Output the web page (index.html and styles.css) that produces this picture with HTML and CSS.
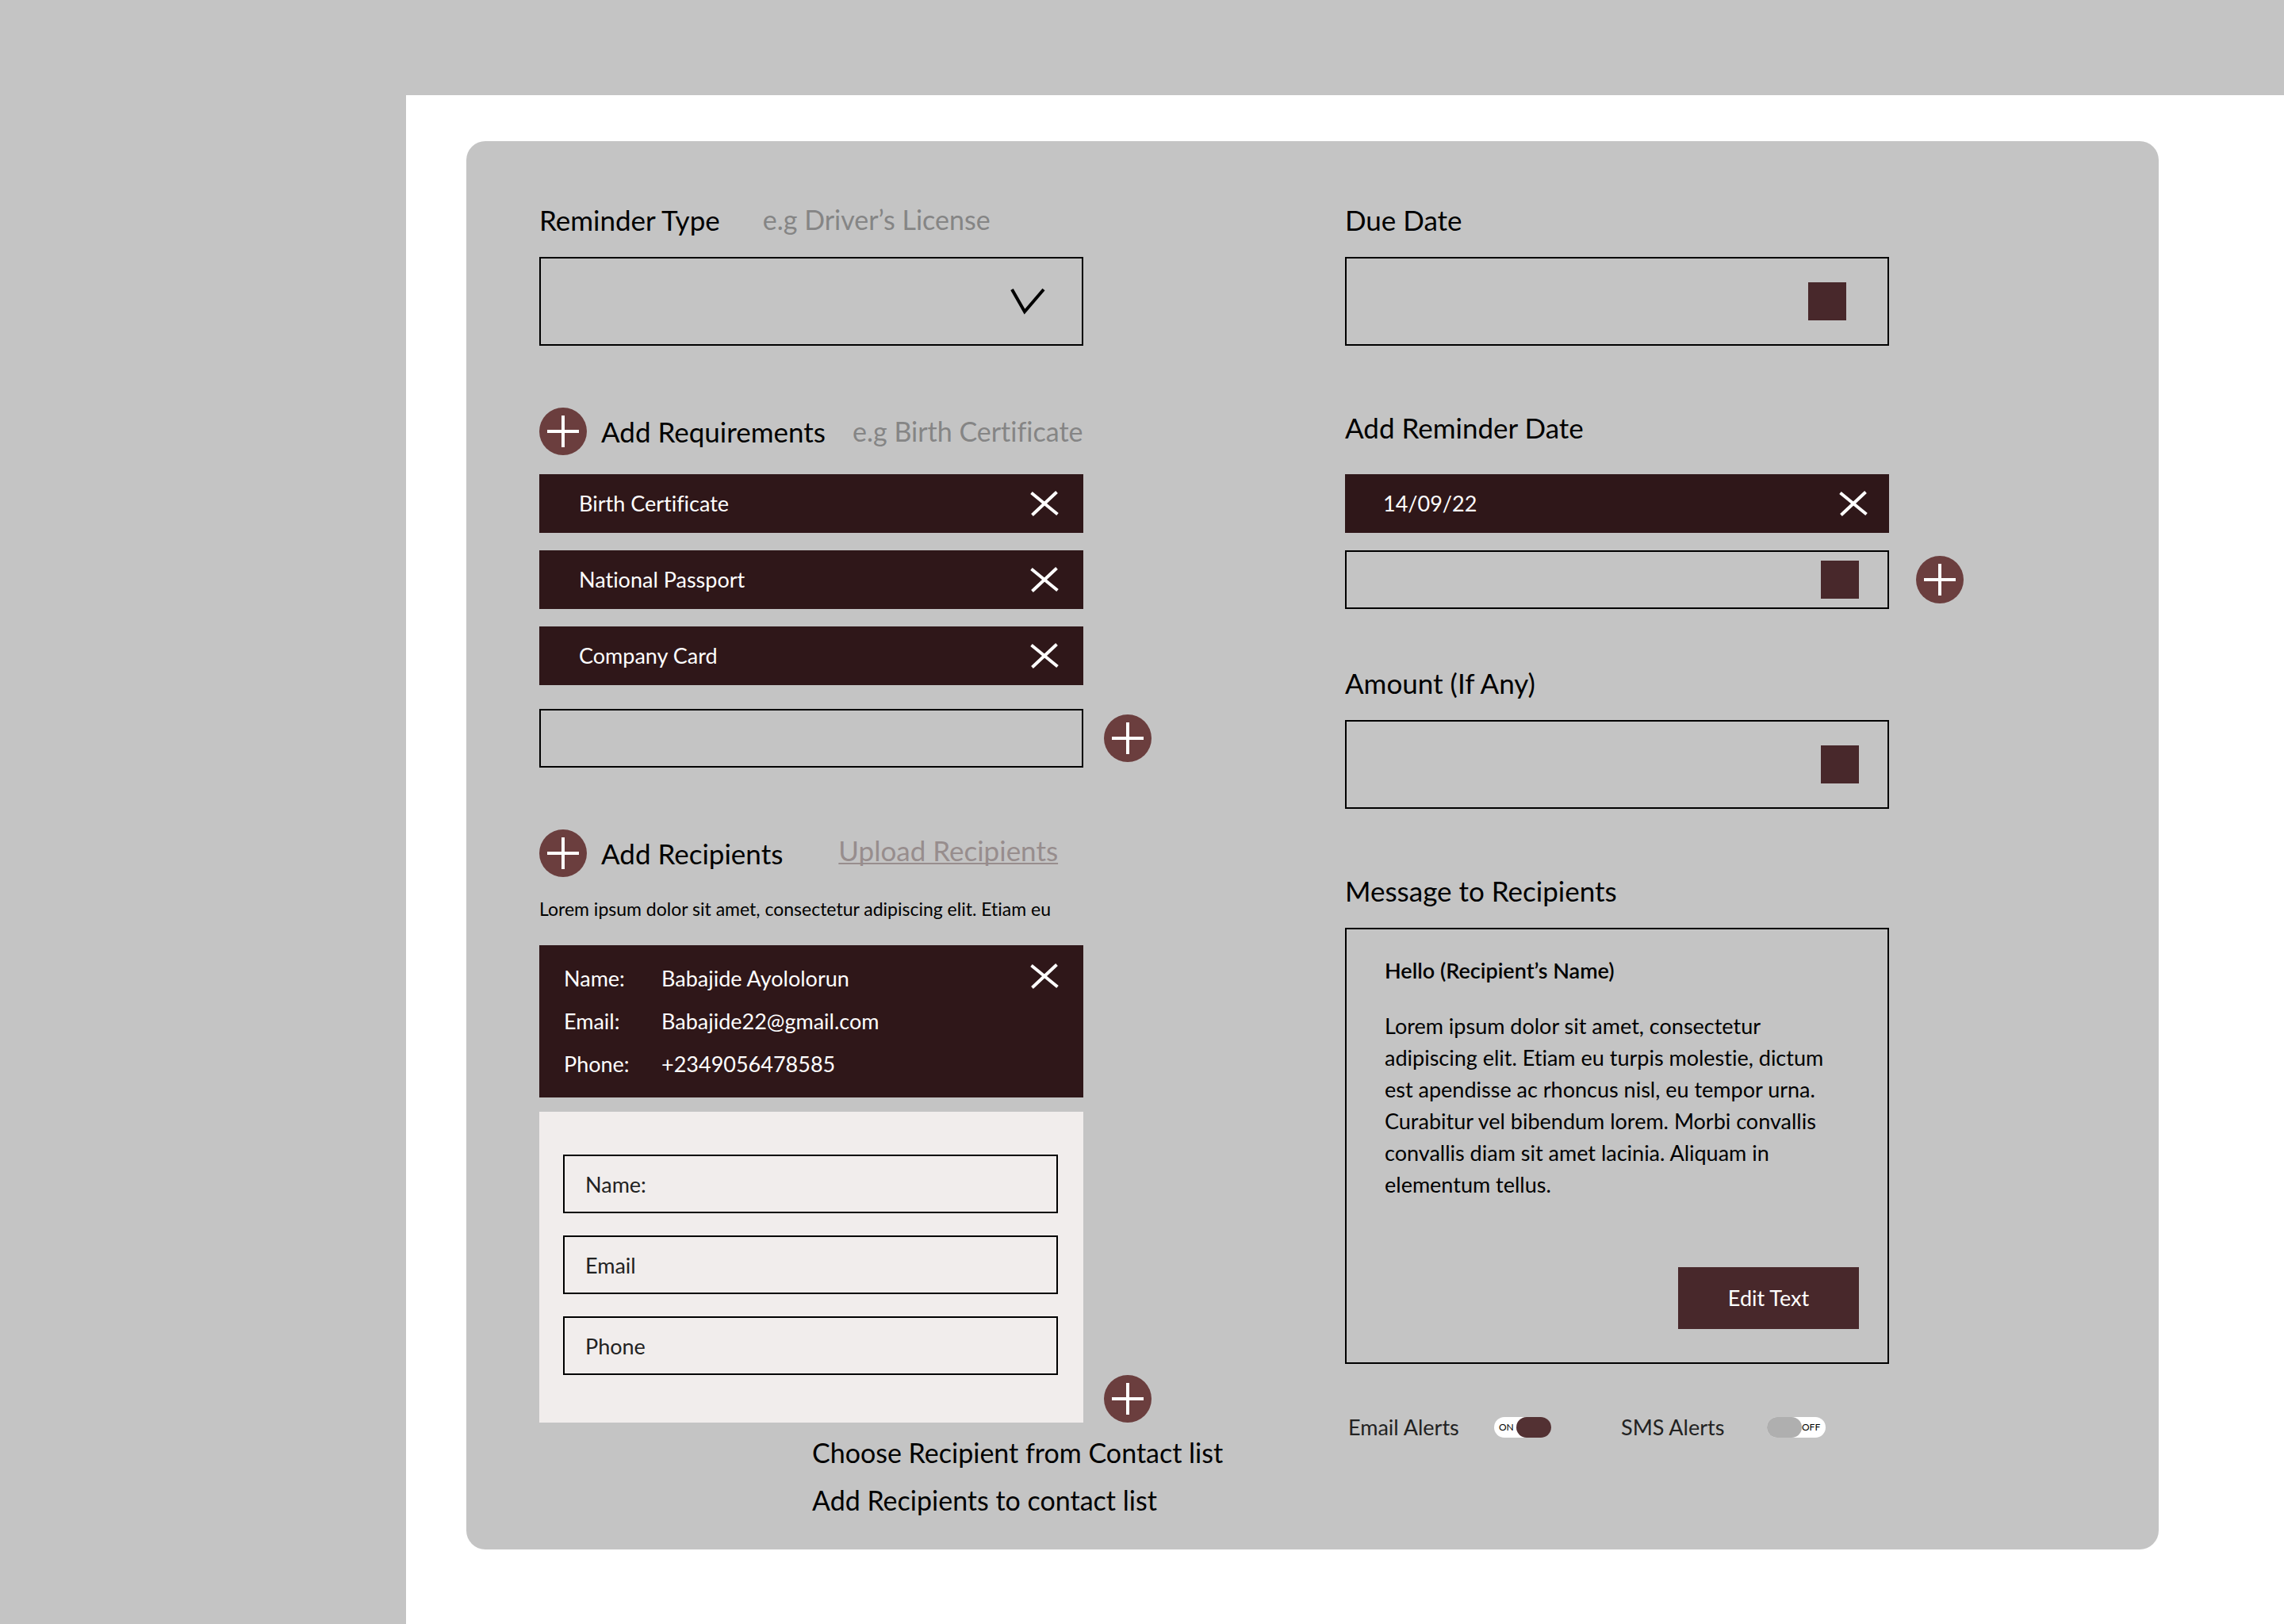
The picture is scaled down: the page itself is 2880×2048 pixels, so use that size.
FILE: index.html
```html
<!DOCTYPE html>
<html lang="en">
<head>
<meta charset="utf-8">
<title>Add Reminder</title>
<link rel="stylesheet" href="styles.css">
</head>
<body>
<svg class="sprite" aria-hidden="true">
  <symbol id="plus" viewBox="0 0 60 60"><circle cx="30" cy="30" r="30" fill="#6b3e3e"/><path d="M30 10V50M10 30H50" stroke="#fff" stroke-width="4"/></symbol>
  <symbol id="cross" viewBox="0 0 36 32"><path d="M1.5 2.5L34.5 29.500M33.500 1.500L2.500 30.500" stroke="#fff" stroke-width="4"/></symbol>
</svg>
<main class="page">
  <form class="panel">
    <div class="column">
      <section class="group">
        <div class="heading">
          <label class="title" for="type">Reminder Type</label>
          <span class="hint hint-type">e.g Driver’s License</span>
        </div>
        <div class="select box tall">
          <select id="type"><option value=""></option><option>Driver’s License</option></select>
          <svg class="chevron" viewBox="0 0 44 34" aria-hidden="true"><path d="M2 2L18 30L42 2" fill="none" stroke="#000" stroke-width="4"/></svg>
        </div>
      </section>

      <section class="group">
        <div class="heading heading-add">
          <button class="add" type="button" aria-label="Add requirement"><svg><use href="#plus"/></svg></button>
          <label class="title" for="requirement">Add Requirements</label>
          <span class="hint">e.g Birth Certificate</span>
        </div>
        <ul class="chips">
          <li class="chip">Birth Certificate<button class="remove" type="button" aria-label="Remove Birth Certificate"><svg><use href="#cross"/></svg></button></li>
          <li class="chip">National Passport<button class="remove" type="button" aria-label="Remove National Passport"><svg><use href="#cross"/></svg></button></li>
          <li class="chip">Company Card<button class="remove" type="button" aria-label="Remove Company Card"><svg><use href="#cross"/></svg></button></li>
        </ul>
        <div class="row row-new">
          <div class="box"><input id="requirement" type="text"></div>
          <button class="add" type="button" aria-label="Add this requirement"><svg><use href="#plus"/></svg></button>
        </div>
      </section>

      <section class="group">
        <div class="heading heading-add">
          <button class="add" type="button" aria-label="Add recipient"><svg><use href="#plus"/></svg></button>
          <h2 class="title">Add Recipients</h2>
          <a class="upload" href="#upload">Upload Recipients</a>
        </div>
        <p class="note">Lorem ipsum dolor sit amet, consectetur adipiscing elit. Etiam eu</p>
        <div class="recipient">
          <dl class="details">
            <dt>Name:</dt><dd>Babajide Ayololorun</dd>
            <dt>Email:</dt><dd>Babajide22@gmail.com</dd>
            <dt>Phone:</dt><dd>+2349056478585</dd>
          </dl>
          <button class="remove" type="button" aria-label="Remove Babajide Ayololorun"><svg><use href="#cross"/></svg></button>
        </div>
        <div class="row row-end">
          <div class="new-recipient">
            <input type="text" placeholder="Name:" aria-label="Name">
            <input type="email" placeholder="Email" aria-label="Email">
            <input type="tel" placeholder="Phone" aria-label="Phone">
          </div>
          <button class="add" type="button" aria-label="Add this recipient"><svg><use href="#plus"/></svg></button>
        </div>
        <nav class="contact-links">
          <a href="#choose">Choose Recipient from Contact list</a>
          <a href="#save">Add Recipients to contact list</a>
        </nav>
      </section>
    </div>

    <div class="column column-right">
      <section class="group">
        <label class="title" for="due">Due Date</label>
        <div class="box tall inset"><input id="due" type="text"><button class="picker" type="button" aria-label="Pick due date"></button></div>
      </section>

      <section class="group group-dates">
        <label class="title" for="date">Add Reminder Date</label>
        <ul class="chips">
          <li class="chip">14/09/22<button class="remove" type="button" aria-label="Remove 14/09/22"><svg><use href="#cross"/></svg></button></li>
        </ul>
        <div class="row">
          <div class="box"><input id="date" type="text"><button class="picker" type="button" aria-label="Pick reminder date"></button></div>
          <button class="add" type="button" aria-label="Add this date"><svg><use href="#plus"/></svg></button>
        </div>
      </section>

      <section class="group group-amount">
        <label class="title" for="amount">Amount (If Any)</label>
        <div class="box tall"><input id="amount" type="text"><button class="picker" type="button" aria-label="Pick currency"></button></div>
      </section>

      <section class="group">
        <h2 class="title">Message to Recipients</h2>
        <div class="message">
          <strong>Hello (Recipient’s Name)</strong>
          <p>Lorem ipsum dolor sit amet, consectetur adipiscing elit. Etiam eu turpis molestie, dictum est apendisse ac rhoncus nisl, eu tempor urna. Curabitur vel bibendum lorem. Morbi convallis convallis diam sit amet lacinia. Aliquam in elementum tellus.</p>
          <button class="edit" type="button">Edit Text</button>
        </div>
      </section>

      <div class="alerts">
        <label for="email-alerts">Email Alerts</label>
        <span class="switch"><input id="email-alerts" type="checkbox" role="switch" checked><span class="state">ON</span></span>
        <label for="sms-alerts">SMS Alerts</label>
        <span class="switch off"><input id="sms-alerts" type="checkbox" role="switch"><span class="state">OFF</span></span>
      </div>
    </div>
  </form>
</main>
</body>
</html>
```
FILE: styles.css
```css
* { box-sizing: border-box; }

body {
  margin: 0;
  min-height: 100vh;
  padding: 120px 0 0 512px;
  display: flex;
  background: #c4c4c4;
  color: #000;
  font: 27px/36px Lato, "Open Sans", sans-serif;
  font-variant-ligatures: none;
}

h2, p, ul, dl, dd { margin: 0; padding: 0; }
ul { list-style: none; }
svg { display: block; width: 100%; height: 100%; }
a { color: inherit; text-decoration: none; }
button, input, select { margin: 0; padding: 0; border: 0; background: none; font: inherit; color: inherit; }
button { cursor: pointer; flex: none; }
.sprite { display: none; }

.page { flex: 1; padding: 58px 158px 95px 76px; background: #fff; }

.panel {
  display: grid;
  grid-template-columns: 1fr 1fr;
  padding: 77px 10px 32px 92px;
  border-radius: 24px;
  background: #c4c4c4;
}

.column { display: flex; flex-direction: column; gap: 78px; min-width: 0; }
.column-right { gap: 0; }
.group { display: flex; flex-direction: column; align-items: flex-start; }

/* Headings */
.heading { display: flex; align-items: center; }
.heading-add { margin-bottom: 24px; }
.title { font-size: 35px; line-height: 44px; font-weight: 400; }
.heading-add .title { margin-left: 18px; }
.hint { margin-left: 34px; color: #858585; font-size: 34px; line-height: 44px; }
.hint-type { margin-left: 54px; }
.upload {
  margin-left: 70px;
  padding-bottom: 8px;
  color: #978d8d;
  font-size: 35px;
  line-height: 44px;
  text-decoration: underline;
  text-decoration-thickness: 2px;
  text-underline-offset: 2px;
  text-decoration-skip-ink: none;
}
.note { margin-bottom: 30px; font-size: 23px; line-height: 32px; }

/* Fields */
.box {
  display: flex;
  align-items: center;
  width: 686px;
  max-width: 100%;
  height: 74px;
  padding-right: 36px;
  border: 2px solid #000;
}
.box input { flex: 1; min-width: 0; height: 100%; padding-left: 28px; }
.tall { height: 112px; margin-top: 25px; }
.inset { padding-right: 52px; }
.picker { width: 48px; height: 48px; background: #48282b; }

.select { display: grid; padding: 0; }
.select > * { grid-area: 1 / 1; }
.select select { width: 100%; height: 108px; padding-left: 28px; appearance: none; }
.select .chevron { width: 44px; height: 34px; margin-right: 46px; justify-self: end; pointer-events: none; }

.row { display: flex; align-items: center; gap: 26px; }
.row-new { margin-top: 30px; }
.row-end { align-items: flex-end; }
.add { width: 60px; height: 60px; border-radius: 50%; }

/* Saved entries */
.chips { display: flex; flex-direction: column; gap: 22px; width: 686px; max-width: 100%; }
.chip {
  display: flex;
  align-items: center;
  justify-content: space-between;
  height: 74px;
  padding: 0 31px 0 50px;
  background: #2f1719;
  color: #fff;
}
.remove { width: 36px; height: 32px; }

.recipient {
  display: flex;
  justify-content: space-between;
  width: 686px;
  max-width: 100%;
  padding: 15px 31px;
  background: #2f1719;
  color: #fff;
}
.details { display: grid; grid-template-columns: 123px 1fr; line-height: 54px; }
.recipient .remove { margin-top: 8px; }

.new-recipient {
  display: flex;
  flex-direction: column;
  gap: 28px;
  width: 686px;
  margin-top: 18px;
  padding: 54px 32px 60px 30px;
  background: #f1edec;
}
.new-recipient input { height: 74px; padding: 0 26px; border: 2px solid #000; }
.new-recipient input::placeholder { color: #222; opacity: 1; }

.contact-links {
  display: flex;
  flex-direction: column;
  margin: 8px 0 0 344px;
  font-size: 34px;
  line-height: 60px;
}

/* Right column */
.group-dates { margin: 81px 0 71px; }
.group-dates .chips { margin: 37px 0 22px; }
.group-dates .row { gap: 34px; }
.group-dates .chip { padding: 0 27px 0 48px; }
.group-amount { margin-bottom: 81px; }

.message {
  display: flex;
  flex-direction: column;
  width: 686px;
  max-width: 100%;
  min-height: 550px;
  margin-top: 25px;
  padding: 32px 36px 42px 48px;
  border: 2px solid #000;
  line-height: 40px;
}
.message strong { font-weight: 600; }
.message p { margin: 30px 30px 0 0; }
.edit {
  align-self: flex-end;
  width: 228px;
  height: 78px;
  margin-top: auto;
  background: #48282b;
  color: #fff;
}

.alerts {
  display: grid;
  grid-template-columns: 184px 160px 184px auto;
  align-items: center;
  justify-content: start;
  margin-top: 62px;
  padding-left: 4px;
  color: #222;
}
.switch { display: inline-grid; align-items: center; justify-self: start; }
.switch > * { grid-area: 1 / 1; }
.switch input {
  width: 72px;
  height: 26px;
  border-radius: 13px;
  appearance: none;
  background: #fff;
}
.switch input::before {
  content: "";
  display: block;
  width: 44px;
  height: 26px;
  border-radius: 13px;
  background: #afafaf;
}
.switch input:checked::before { margin-left: 28px; background: #533133; }
.state { padding-left: 6px; font-size: 12px; line-height: 26px; color: #000; pointer-events: none; }
.off input { width: 74px; }
.off .state { padding-left: 44px; }
```
